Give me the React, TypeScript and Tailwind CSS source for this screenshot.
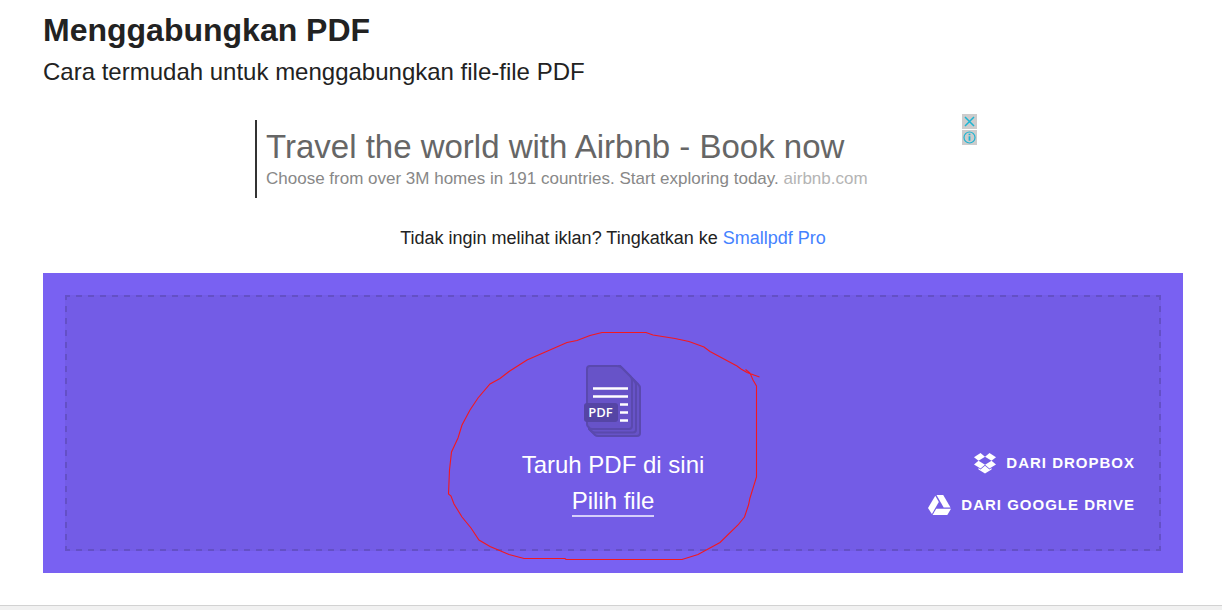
import React from 'react';

function PdfStackIcon() {
  return (
    <svg width="60" height="74" viewBox="583 364 60 74" fill="none" aria-hidden="true">
      <g fill="#6753c8" stroke="#5a49ae" strokeWidth="2" strokeLinejoin="round">
        <path d="M619 366h1l18 18q2 2 2 4v45a3 3 0 0 1-3 3h-39q-2 0-3-1l-6-6z" />
        <path d="M619 366h1l14 14.500q2 2 2 4v45a3 3 0 0 1-3 3h-38q-2 0-3-1l-3-3z" />
        <path d="M590 366h27q3 0 5 2l8.500 8.500q1.500 1.500 1.500 4V426a3 3 0 0 1-3 3h-37q-2 0-3-1.500l-1.300-1.300q-.700-1-.700-2.500V369a3 3 0 0 1 3-3z" />
      </g>
      <rect x="584" y="403" width="34" height="19" rx="3" fill="#5545a5" />
      <path d="M593 388.500h35M593 396.500h35M620 404.500h8M620 412.500h8M620 420.500h8" stroke="#fff" strokeWidth="2.600" />
      <text x="600.500" y="417" fill="#fff" fontFamily="'Open Sans', sans-serif" fontSize="13" fontWeight="600" textAnchor="middle">
        PDF
      </text>
    </svg>
  );
}

function DropboxIcon() {
  return (
    <svg width="22" height="21" viewBox="0 0 22 21" fill="#fff" aria-hidden="true">
      <path d="M6.500 0 0 4.200l4.500 3.600L11 3.800z" />
      <path d="M15.500 0 22 4.200l-4.500 3.600L11 3.800z" />
      <path d="M0 11.400 4.500 7.800 11 11.800 6.500 15.500z" />
      <path d="M22 11.400 17.500 7.800 11 11.800l4.500 3.700z" />
      <path d="M11 12.700 6.500 16.400l-2-1.300v1.500L11 20.500l6.500-3.900v-1.500l-2 1.300z" />
    </svg>
  );
}

function DriveIcon() {
  return (
    <svg width="23" height="20" viewBox="0 0 23 20" fill="#fff" aria-hidden="true">
      <path d="M7.300.7 10.800 6.900 3.900 19 0 13z" />
      <path d="M8.500 0h6.700l7.300 12.500h-6.800z" />
      <path d="M8.200 13.700H23L19.300 20H4.600z" />
    </svg>
  );
}

function DashedOutline() {
  return (
    <svg
      className="pointer-events-none absolute inset-0 size-full"
      stroke="#6450c6"
      strokeWidth="4"
      strokeDasharray="6"
      strokeDashoffset="1"
      aria-hidden="true"
    >
      <line x1="0" y1="0" x2="100%" y2="0" />
      <line x1="0" y1="100%" x2="100%" y2="100%" />
      <line x1="0" y1="0" x2="0" y2="100%" />
      <line x1="100%" y1="0" x2="100%" y2="100%" />
    </svg>
  );
}

function Scribble() {
  return (
    <svg
      className="pointer-events-none absolute left-1/2 top-[52px] -translate-x-1/2"
      width="340"
      height="245"
      viewBox="443 325 340 245"
      fill="none"
      stroke="#f3181f"
      strokeWidth="1.100"
      aria-hidden="true"
    >
      <path d="M759.500 377 747 372.500 741 369 737 366 710 351.500 704 347 689 341.500 675 338.500 653 335 646 332.500H602L590 335.500 577 340.500 567 342.500 527 360 509 371.500 500 378.500 490 384 478 398 470 410 462 425 458 438 451.500 452 449.500 470 448.500 494 451 496 454 504 462 517 471 528 479 540 490 546.500 509 554.500 524 558.500H565L566 559.500H682L698 554.500 720 542.500 738 525 744.500 517 748.500 505 750 498 756.500 477V386L753 380 750 373 745.500 369.500" />
    </svg>
  );
}

const sources = [
  { label: 'DARI DROPBOX', Icon: DropboxIcon },
  { label: 'DARI GOOGLE DRIVE', Icon: DriveIcon },
];

export default function App() {
  return (
    <div className="bg-white font-['Liberation_Sans',Arial,sans-serif] text-[#222]">
      <main className="pt-2.5 pr-[39px] pb-8 pl-[43px]">
        <h1 className="text-[32px] leading-10 font-bold">Menggabungkan PDF</h1>
        <p className="mt-1 text-2xl leading-9">Cara termudah untuk menggabungkan file-file PDF</p>

        <aside className="mx-auto mt-6 flex max-w-[728px] items-start justify-between">
          <div className="mt-1.5 ml-1.5 border-l-2 border-[#333] pt-[7px] pb-[7px] pl-[9px]">
            <a href="#airbnb" className="block text-[33px] leading-10 text-[#666]">
              Travel the world with Airbnb - Book now
            </a>
            <p className="text-[17px] leading-6 text-[#888]">
              Choose from over 3M homes in 191 countries. Start exploring today.{' '}
              <a href="#airbnb" className="text-[#b4b4b4]">airbnb.com</a>
            </p>
          </div>
          <div className="flex flex-col gap-px">
            <button type="button" aria-label="Tutup iklan" className="size-[15px] bg-[#ccc]">
              <svg width="15" height="15" viewBox="0 0 15 15" stroke="#1db4d2" strokeWidth="1.5" aria-hidden="true">
                <path d="M3 3l9 9M12 3l-9 9" />
              </svg>
            </button>
            <button type="button" aria-label="Info iklan" className="size-[15px] bg-[#ccc]">
              <svg width="15" height="15" viewBox="0 0 15 15" fill="none" stroke="#1db4d2" aria-hidden="true">
                <circle cx="7.500" cy="7.500" r="5.500" strokeWidth="1.200" />
                <path d="M7.500 6.300v4.500M7.500 3.800v1.400" strokeWidth="1.800" />
              </svg>
            </button>
          </div>
        </aside>

        <p className="mt-[26px] text-center text-lg leading-7">
          Tidak ingin melihat iklan? Tingkatkan ke{' '}
          <a href="#pro" className="text-[#4482ff]">Smallpdf Pro</a>
        </p>

        <section className="relative mt-[21px] bg-[#7961f2] p-[22px]">
          <div className="relative grid grid-cols-[1fr_auto_1fr] bg-[#735ce6] px-[26px] pt-[69px] pb-[34px] text-white">
            <DashedOutline />
            <div className="col-start-2 flex flex-col items-center">
              <PdfStackIcon />
              <p className="mt-[9px] text-2xl leading-9">Taruh PDF di sini</p>
              <button type="button" className="mt-1 border-b-2 border-[#d5cefa] text-2xl leading-7">
                Pilih file
              </button>
            </div>
            <div className="flex flex-col items-end justify-end gap-[18px]">
              {sources.map(({ label, Icon }) => (
                <button key={label} type="button" className="flex items-center gap-2.5 text-[15px] leading-6 font-bold tracking-[1px]">
                  <Icon />
                  {label}
                </button>
              ))}
            </div>
          </div>
          <Scribble />
        </section>
      </main>
      <footer className="h-[5px] border-t border-[#d2d2d2] bg-[#f1f1f1]" />
    </div>
  );
}
